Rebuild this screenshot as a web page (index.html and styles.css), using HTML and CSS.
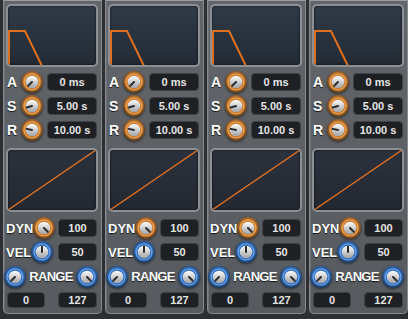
FILE: index.html
```html
<!DOCTYPE html>
<html lang="en">

<head>
    <meta charset="UTF-8">
    <title>Envelope Strips</title>
    <link rel="stylesheet" href="styles.css">
</head>

<body>
    <svg class="defs" width="0" height="0">
        <defs>
            <radialGradient id="glow-o" cx="50%" cy="45%" r="55%">
                <stop offset="0.55" stop-color="#d0843a"/>
                <stop offset="1" stop-color="#5e3c1c"/>
            </radialGradient>
            <radialGradient id="glow-b" cx="50%" cy="45%" r="55%">
                <stop offset="0.55" stop-color="#3e7cc8"/>
                <stop offset="1" stop-color="#1c3a62"/>
            </radialGradient>
            <linearGradient id="face" x1="0" y1="0" x2="0" y2="1">
                <stop offset="0" stop-color="#fdfdfd"/>
                <stop offset="1" stop-color="#a0a2a4"/>
            </linearGradient>
            <symbol id="knob-o" viewBox="0 0 22 22">
                <circle cx="11" cy="11" r="11" fill="url(#glow-o)"/>
                <circle cx="11" cy="11" r="8.6" fill="#f5a550"/>
                <circle cx="11" cy="11" r="7.4" fill="#c9782c"/>
                <circle cx="11" cy="11" r="6.3" fill="url(#face)"/>
            </symbol>
            <symbol id="knob-b" viewBox="0 0 22 22">
                <circle cx="11" cy="11" r="11" fill="url(#glow-b)"/>
                <circle cx="11" cy="11" r="8.6" fill="#6aa6ee"/>
                <circle cx="11" cy="11" r="7.4" fill="#2f6cc0"/>
                <circle cx="11" cy="11" r="6.3" fill="url(#face)"/>
            </symbol>
        </defs>
    </svg>

    <div class="rack">
        <!-- strip 1 -->
        <div class="strip">
            <div class="screen">
                <svg viewBox="0 0 88 59" preserveAspectRatio="none"><path class="env" d="M1 60V25H17L34 60"/></svg>
            </div>
            <div class="row"><span class="lbl lbl-short">A</span><svg class="knob"><use href="#knob-o"/><path class="ptr" d="M11 11V5.5" transform="rotate(-135 11 11)"/></svg><div class="val val-wide">0 ms</div></div>
            <div class="row"><span class="lbl lbl-short">S</span><svg class="knob"><use href="#knob-o"/><path class="ptr" d="M11 11V5.5" transform="rotate(-105 11 11)"/></svg><div class="val val-wide">5.00 s</div></div>
            <div class="row"><span class="lbl lbl-short">R</span><svg class="knob"><use href="#knob-o"/><path class="ptr" d="M11 11V5.5" transform="rotate(-78 11 11)"/></svg><div class="val val-wide">10.00 s</div></div>
            <div class="screen screen-curve">
                <svg viewBox="0 0 88 60" preserveAspectRatio="none"><path class="curve" d="M0 60L88 0"/></svg>
            </div>
            <div class="row row-gap"><span class="lbl lbl-dyn">DYN</span><svg class="knob"><use href="#knob-o"/><path class="ptr" d="M11 11V5.5" transform="rotate(135 11 11)"/></svg><div class="val">100</div></div>
            <div class="row"><span class="lbl lbl-vel">VEL</span><svg class="knob"><use href="#knob-b"/><path class="ptr" d="M11 11V5.5"/></svg><div class="val">50</div></div>
            <div class="row row-range"><svg class="knob"><use href="#knob-b"/><path class="ptr" d="M11 11V5.5" transform="rotate(-135 11 11)"/></svg><span class="lbl lbl-range">RANGE</span><svg class="knob"><use href="#knob-b"/><path class="ptr" d="M11 11V5.5" transform="rotate(135 11 11)"/></svg></div>
            <div class="row row-bottom"><div class="val val-lo">0</div><div class="val">127</div></div>
        </div>

        <!-- strip 2 -->
        <div class="strip">
            <div class="screen">
                <svg viewBox="0 0 88 59" preserveAspectRatio="none"><path class="env" d="M1 60V25H17L34 60"/></svg>
            </div>
            <div class="row"><span class="lbl lbl-short">A</span><svg class="knob"><use href="#knob-o"/><path class="ptr" d="M11 11V5.5" transform="rotate(-135 11 11)"/></svg><div class="val val-wide">0 ms</div></div>
            <div class="row"><span class="lbl lbl-short">S</span><svg class="knob"><use href="#knob-o"/><path class="ptr" d="M11 11V5.5" transform="rotate(-105 11 11)"/></svg><div class="val val-wide">5.00 s</div></div>
            <div class="row"><span class="lbl lbl-short">R</span><svg class="knob"><use href="#knob-o"/><path class="ptr" d="M11 11V5.5" transform="rotate(-78 11 11)"/></svg><div class="val val-wide">10.00 s</div></div>
            <div class="screen screen-curve">
                <svg viewBox="0 0 88 60" preserveAspectRatio="none"><path class="curve" d="M0 60L88 0"/></svg>
            </div>
            <div class="row row-gap"><span class="lbl lbl-dyn">DYN</span><svg class="knob"><use href="#knob-o"/><path class="ptr" d="M11 11V5.5" transform="rotate(135 11 11)"/></svg><div class="val">100</div></div>
            <div class="row"><span class="lbl lbl-vel">VEL</span><svg class="knob"><use href="#knob-b"/><path class="ptr" d="M11 11V5.5"/></svg><div class="val">50</div></div>
            <div class="row row-range"><svg class="knob"><use href="#knob-b"/><path class="ptr" d="M11 11V5.5" transform="rotate(-135 11 11)"/></svg><span class="lbl lbl-range">RANGE</span><svg class="knob"><use href="#knob-b"/><path class="ptr" d="M11 11V5.5" transform="rotate(135 11 11)"/></svg></div>
            <div class="row row-bottom"><div class="val val-lo">0</div><div class="val">127</div></div>
        </div>

        <!-- strip 3 -->
        <div class="strip">
            <div class="screen">
                <svg viewBox="0 0 88 59" preserveAspectRatio="none"><path class="env" d="M1 60V25H17L34 60"/></svg>
            </div>
            <div class="row"><span class="lbl lbl-short">A</span><svg class="knob"><use href="#knob-o"/><path class="ptr" d="M11 11V5.5" transform="rotate(-135 11 11)"/></svg><div class="val val-wide">0 ms</div></div>
            <div class="row"><span class="lbl lbl-short">S</span><svg class="knob"><use href="#knob-o"/><path class="ptr" d="M11 11V5.5" transform="rotate(-105 11 11)"/></svg><div class="val val-wide">5.00 s</div></div>
            <div class="row"><span class="lbl lbl-short">R</span><svg class="knob"><use href="#knob-o"/><path class="ptr" d="M11 11V5.5" transform="rotate(-78 11 11)"/></svg><div class="val val-wide">10.00 s</div></div>
            <div class="screen screen-curve">
                <svg viewBox="0 0 88 60" preserveAspectRatio="none"><path class="curve" d="M0 60L88 0"/></svg>
            </div>
            <div class="row row-gap"><span class="lbl lbl-dyn">DYN</span><svg class="knob"><use href="#knob-o"/><path class="ptr" d="M11 11V5.5" transform="rotate(135 11 11)"/></svg><div class="val">100</div></div>
            <div class="row"><span class="lbl lbl-vel">VEL</span><svg class="knob"><use href="#knob-b"/><path class="ptr" d="M11 11V5.5"/></svg><div class="val">50</div></div>
            <div class="row row-range"><svg class="knob"><use href="#knob-b"/><path class="ptr" d="M11 11V5.5" transform="rotate(-135 11 11)"/></svg><span class="lbl lbl-range">RANGE</span><svg class="knob"><use href="#knob-b"/><path class="ptr" d="M11 11V5.5" transform="rotate(135 11 11)"/></svg></div>
            <div class="row row-bottom"><div class="val val-lo">0</div><div class="val">127</div></div>
        </div>

        <!-- strip 4 -->
        <div class="strip">
            <div class="screen">
                <svg viewBox="0 0 88 59" preserveAspectRatio="none"><path class="env" d="M1 60V25H17L34 60"/></svg>
            </div>
            <div class="row"><span class="lbl lbl-short">A</span><svg class="knob"><use href="#knob-o"/><path class="ptr" d="M11 11V5.5" transform="rotate(-135 11 11)"/></svg><div class="val val-wide">0 ms</div></div>
            <div class="row"><span class="lbl lbl-short">S</span><svg class="knob"><use href="#knob-o"/><path class="ptr" d="M11 11V5.5" transform="rotate(-105 11 11)"/></svg><div class="val val-wide">5.00 s</div></div>
            <div class="row"><span class="lbl lbl-short">R</span><svg class="knob"><use href="#knob-o"/><path class="ptr" d="M11 11V5.5" transform="rotate(-78 11 11)"/></svg><div class="val val-wide">10.00 s</div></div>
            <div class="screen screen-curve">
                <svg viewBox="0 0 88 60" preserveAspectRatio="none"><path class="curve" d="M0 60L88 0"/></svg>
            </div>
            <div class="row row-gap"><span class="lbl lbl-dyn">DYN</span><svg class="knob"><use href="#knob-o"/><path class="ptr" d="M11 11V5.5" transform="rotate(135 11 11)"/></svg><div class="val">100</div></div>
            <div class="row"><span class="lbl lbl-vel">VEL</span><svg class="knob"><use href="#knob-b"/><path class="ptr" d="M11 11V5.5"/></svg><div class="val">50</div></div>
            <div class="row row-range"><svg class="knob"><use href="#knob-b"/><path class="ptr" d="M11 11V5.5" transform="rotate(-135 11 11)"/></svg><span class="lbl lbl-range">RANGE</span><svg class="knob"><use href="#knob-b"/><path class="ptr" d="M11 11V5.5" transform="rotate(135 11 11)"/></svg></div>
            <div class="row row-bottom"><div class="val val-lo">0</div><div class="val">127</div></div>
        </div>
    </div>
</body>

</html>
```

FILE: styles.css
```css
* {
    box-sizing: border-box;
}

body {
    margin: 0;
    background-color: #2d2f32;
    font-family: 'Liberation Sans', Arial, sans-serif;
    height: 319px;
    overflow: hidden;
}

.defs {
    position: absolute;
}

.rack {
    display: flex;
    gap: 3px;
    padding-left: 3px;
}

.strip {
    width: 99px;
    height: 314px;
    display: flex;
    flex-direction: column;
    padding: 3px 3px 5px 2px;
    border: 1px solid #858a8f;
    border-top-color: #9a9ea3;
    border-radius: 0 0 5px 5px;
    background: linear-gradient(#62666b, #575b60);
    box-shadow: inset 1px 0 0 #6c7075;
}

.screen {
    height: 63px;
    border: 2px solid #8c9095;
    border-radius: 5px;
    background: linear-gradient(#2f3b48, #232b35);
    box-shadow: inset 0 0 3px rgba(0, 0, 0, 0.6);
    overflow: hidden;
}

.screen svg {
    display: block;
    width: 100%;
    height: 100%;
}

.screen-curve {
    height: 64px;
    margin-top: 6px;
    background: linear-gradient(#2c323d, #232831);
}

.env {
    fill: none;
    stroke: #e0701e;
    stroke-width: 2;
}

.curve {
    fill: none;
    stroke: #e2711f;
    stroke-width: 1.4;
}

.row {
    height: 24px;
    display: flex;
    align-items: center;
}

.row:nth-child(2) {
    margin-top: 3px;
}

.row-gap {
    margin-top: 4px;
}

.lbl {
    color: #fff;
    font-weight: bold;
    font-size: 13px;
    text-shadow: 0 1px 1px rgba(0, 0, 0, 0.8);
}

.lbl-short {
    width: 15px;
    padding-left: 1px;
    font-size: 14px;
}

.lbl-dyn {
    width: 27px;
}

.lbl-vel {
    width: 25px;
}

.lbl-range {
    letter-spacing: -0.7px;
}

.knob {
    width: 22px;
    height: 22px;
    flex: none;
    filter: drop-shadow(0 1px 1px rgba(0, 0, 0, 0.5));
}

.ptr {
    stroke: #2a2a2a;
    stroke-width: 2;
    stroke-linecap: round;
}

.val {
    width: 39px;
    height: 18px;
    margin-left: auto;
    margin-right: 1px;
    border-radius: 4px;
    background-color: #1e2023;
    border: 1px solid #3e4145;
    color: #e4e4e4;
    font-size: 11px;
    font-weight: bold;
    display: flex;
    align-items: center;
    justify-content: center;
}

.val-wide {
    width: 50px;
}

.row-range {
    justify-content: space-between;
    height: 25px;
    margin-left: -2px;
}

.row-bottom {
    height: 16px;
    margin-top: 3px;
}

.row-bottom .val {
    height: 16px;
}

.row-bottom .val-lo {
    width: 38px;
    margin-left: 1px;
}
```
